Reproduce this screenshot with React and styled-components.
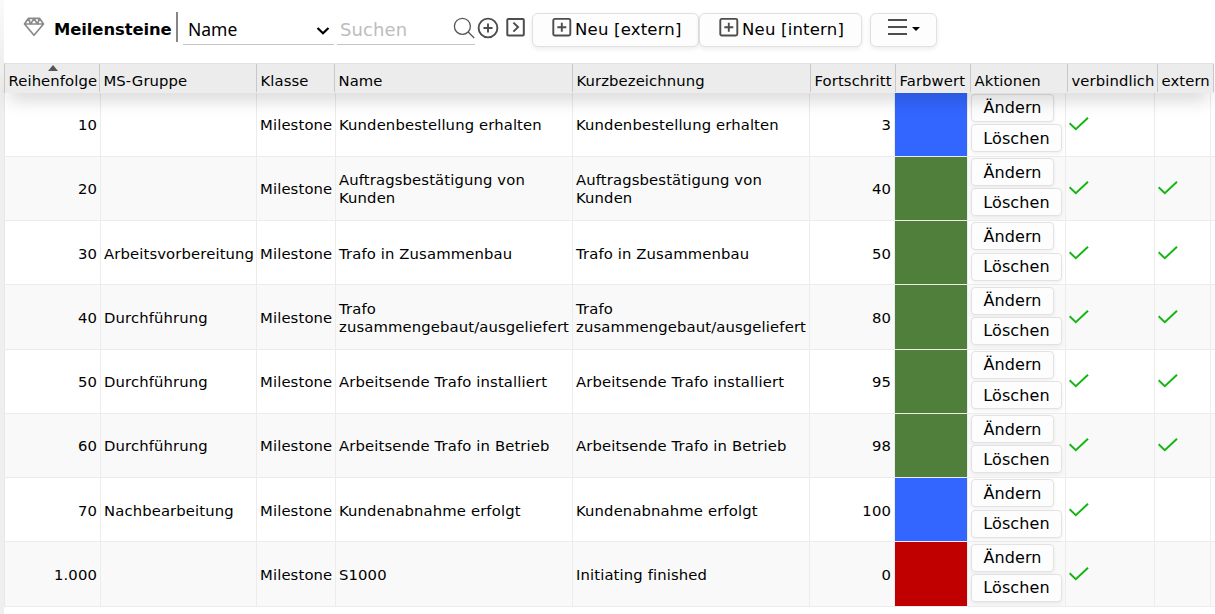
import React, { useState } from 'react';
import styled, { createGlobalStyle } from 'styled-components';

const GlobalStyle = createGlobalStyle`
  * {
    box-sizing: border-box;
  }
  body {
    margin: 0;
    overflow: hidden;
    background: #fff;
    color: #000;
    font-family: 'DejaVu Sans', Verdana, sans-serif;
  }
`;

const Page = styled.div`
  display: flex;
  height: 614px;
  overflow: hidden;
`;

const Edge = styled.div`
  flex: 0 0 4px;
  background: linear-gradient(to bottom, #fafafa, #efefef 60px);
`;

const Main = styled.div`
  flex: 1;
  min-width: 0;
`;

const Toolbar = styled.div`
  display: flex;
  align-items: flex-start;
  height: 63px;
  padding: 12px 0 0 19px;
`;

const Gem = styled.svg`
  flex: none;
  width: 22px;
  height: 20px;
  margin-top: 5px;
`;

const Title = styled.div`
  width: 131px;
  padding-left: 9px;
  font-size: 16.4px;
  font-weight: bold;
  line-height: 36px;
  letter-spacing: -0.08px;
  white-space: nowrap;
`;

const Divider = styled.div`
  width: 2px;
  height: 30px;
  background: #868686;
`;

const Select = styled.button`
  display: flex;
  justify-content: space-between;
  width: 151px;
  height: 33px;
  margin: 0 3px 0 5px;
  padding: 0 4px 0 5px;
  border: 0;
  border-bottom: 1px solid #c4c4c4;
  background: none;
  color: #000;
  font: 17.5px/35px 'Noto Sans', sans-serif;
  text-align: left;

  svg {
    width: 14px;
    height: 10px;
    margin-top: 14px;
  }
`;

const Search = styled.div`
  display: flex;
  width: 138px;
  height: 33px;
  border-bottom: 1px solid #c4c4c4;

  input {
    width: 116px;
    padding: 2px 0 0 3px;
    border: 0;
    outline: 0;
    background: none;
    font: 18px 'DejaVu Sans', sans-serif;
    letter-spacing: 0.1px;
  }
  input::placeholder {
    color: #bdbdbd;
    opacity: 1;
  }
  svg {
    flex: none;
    width: 22px;
    height: 22px;
    margin-top: 5px;
  }
`;

const IconButton = styled.button`
  display: flex;
  margin: 4px 0 0 ${(p) => p.$gap}px;
  padding: 0;
  border: 0;
  background: none;
`;

const Button = styled.button`
  display: flex;
  width: ${(p) => p.$width}px;
  height: 34px;
  margin: 1px 0 0 ${(p) => p.$gap || 0}px;
  padding: 0 0 0 ${(p) => p.$pad}px;
  border: 1px solid #e0e0e0;
  border-radius: 6px;
  background: #fdfdfd;
  box-shadow: 0 2px 5px rgba(0, 0, 0, 0.08);
  color: #000;
  font: 16.5px/31px 'DejaVu Sans', sans-serif;
  letter-spacing: 0.2px;
  white-space: nowrap;

  svg {
    flex: none;
    margin-top: 3px;
  }
  span {
    margin-left: 3px;
  }
`;

const Head = styled.div`
  display: grid;
  grid-template-columns: 95px 157px 78px 238px 238px 85px 75px 97px 90px 56px;
  position: relative;
  z-index: 1;
  width: 1210px;
  height: 29.6px;
  border-top: 1px solid #e2e2e2;
  border-left: 1px solid #c8c8c8;
  background: #ececec;
  box-shadow: 0 12px 18px -5px rgba(0, 0, 0, 0.16);
`;

const HeadCell = styled.div`
  position: relative;
  height: 28px;
  padding-left: 3.5px;
  border-right: 1px solid #c8c8c8;
  font-size: 14.8px;
  line-height: 34px;
  letter-spacing: 0.1px;
  white-space: nowrap;
`;

const SortMark = styled.i`
  position: absolute;
  top: 1px;
  left: 43px;
  border: solid transparent;
  border-width: 0 5px 6px;
  border-bottom-color: #555;
`;

// fractional height, the rows snap to 64px or 65px
const Row = styled.div`
  display: grid;
  grid-template-columns: 96px 156px 79px 237px 237px 85px 73px 98px 89px 56px 1fr;
  grid-template-rows: 100%;
  height: 64.25px;
  border-left: 1px solid #e8e8e8;
  border-bottom: 1px solid #ececec;
  background: #fff;

  &:nth-child(even) {
    background: #f9f9f9;
  }
`;

const Cell = styled.div`
  display: flex;
  align-items: center;
  justify-content: ${(p) => (p.$right ? 'flex-end' : 'flex-start')};
  padding: 1.75px 3px 0;
  border-right: 1px solid #ececec;
  font-size: 14.8px;
  line-height: 18px;
  letter-spacing: 0.13px;
  white-space: pre;

  svg {
    margin-bottom: 2px;
  }
`;

const Swatch = styled.div`
  border-right: 1px solid #ececec;
  background: ${(p) => p.$color} content-box;
`;

const Actions = styled.div`
  display: flex;
  flex-direction: column;
  align-items: flex-start;
  gap: 2.25px;
  padding: 1.25px 0 0 3px;
  border-right: 1px solid #ececec;
`;

const ActionButton = styled.button`
  flex: none;
  width: ${(p) => p.$width}px;
  height: 28px;
  padding: 0;
  border: 1px solid #e2e2e2;
  border-radius: 4px;
  background: #fdfdfd;
  box-shadow: 0 2px 4px rgba(0, 0, 0, 0.06);
  color: #000;
  font: 16px/25px 'DejaVu Sans', sans-serif;
  letter-spacing: 0.1px;
`;

const blue = '#3366ff';
const green = '#4f7f3a';
const red = '#c00000';

const milestones = [
  { order: '10', group: '', name: 'Kundenbestellung erhalten', progress: 3, color: blue, binding: true },
  { order: '20', group: '', name: 'Auftragsbestätigung von\nKunden', progress: 40, color: green, binding: true, external: true },
  { order: '30', group: 'Arbeitsvorbereitung', name: 'Trafo in Zusammenbau', progress: 50, color: green, binding: true, external: true },
  { order: '40', group: 'Durchführung', name: 'Trafo\nzusammengebaut/ausgeliefert', progress: 80, color: green, binding: true, external: true },
  { order: '50', group: 'Durchführung', name: 'Arbeitsende Trafo installiert', progress: 95, color: green, binding: true, external: true },
  { order: '60', group: 'Durchführung', name: 'Arbeitsende Trafo in Betrieb', progress: 98, color: green, binding: true, external: true },
  { order: '70', group: 'Nachbearbeitung', name: 'Kundenabnahme erfolgt', progress: 100, color: blue, binding: true },
  { order: '1.000', group: '', name: 'S1000', short: 'Initiating finished', progress: 0, color: red, binding: true },
];

function PlusBox() {
  return (
    <svg width="20" height="20" viewBox="0 0 20 20" fill="none" stroke="#4d4d4d" strokeWidth="1.9">
      <rect x="1.3" y="1.9" width="17" height="16.6" rx="1.5" />
      <path d="M5.3 10.2h9M9.8 5.7v9" />
    </svg>
  );
}

function Check() {
  return (
    <svg width="20" height="14" viewBox="0 0 20 14" fill="none" stroke="#10b510" strokeWidth="1.9">
      <path d="M.6 6.3 6.8 12.2 19 .8" />
    </svg>
  );
}

function MilestoneRow({ item }) {
  return (
    <Row>
      <Cell $right>{item.order}</Cell>
      <Cell>{item.group}</Cell>
      <Cell>Milestone</Cell>
      <Cell>{item.name}</Cell>
      <Cell>{item.short || item.name}</Cell>
      <Cell $right>{item.progress}</Cell>
      <Swatch $color={item.color} />
      <Actions>
        <ActionButton $width={83}>Ändern</ActionButton>
        <ActionButton $width={91}>Löschen</ActionButton>
      </Actions>
      <Cell>{item.binding && <Check />}</Cell>
      <Cell>{item.external && <Check />}</Cell>
    </Row>
  );
}

function App() {
  const [search, setSearch] = useState('');

  return (
    <>
      <GlobalStyle />
      <Page>
        <Edge />
        <Main>
          <Toolbar>
            <Gem viewBox="0 0 22 20" fill="none" stroke="#8a8a8a" strokeWidth="1.7" strokeLinejoin="round">
              <path d="M5.5 1.3h11l4 5.7-9.5 11.2L1.5 7zM1.5 7h19M5.5 1.3l2 5.7L11 1.6 14.5 7l2-5.7" />
            </Gem>
            <Title>Meilensteine</Title>
            <Divider />
            <Select>
              Name
              <svg viewBox="0 0 14 10" fill="none" stroke="#000" strokeWidth="2.2">
                <path d="M1.5 2 7 7.3 12.5 2" />
              </svg>
            </Select>
            <Search>
              <input placeholder="Suchen" value={search} onChange={(e) => setSearch(e.target.value)} />
              <svg viewBox="0 0 22 22" fill="none" stroke="#555" strokeWidth="1.3">
                <circle cx="9.4" cy="9.3" r="8" />
                <path d="m15.2 15 6 6" />
              </svg>
            </Search>
            <IconButton $gap={2}>
              <svg width="22" height="24" viewBox="0 0 22 24" fill="none" stroke="#4d4d4d" strokeWidth="1.9">
                <circle cx="11" cy="12" r="9.4" />
                <path d="M6.5 12h9M11 7.5v9" />
              </svg>
            </IconButton>
            <IconButton $gap={7}>
              <svg width="20" height="22" viewBox="0 0 20 22" fill="none" stroke="#4d4d4d" strokeWidth="2">
                <rect x="1.3" y="2.9" width="16.5" height="16.5" rx="1" />
                <path d="m7.4 6.6 4.6 4.5-4.6 4.5" />
              </svg>
            </IconButton>
            <Button $width={167} $gap={6} $pad={19}>
              <PlusBox />
              <span>Neu [extern]</span>
            </Button>
            <Button $width={163} $pad={19}>
              <PlusBox />
              <span>Neu [intern]</span>
            </Button>
            <Button $width={67} $gap={8} $pad={17}>
              <svg width="34" height="20" viewBox="0 0 34 20">
                <path d="M0 2.9h19M0 10h19M0 17h19" stroke="#4d4d4d" strokeWidth="2" />
                <path d="M24 10h8l-4 4z" />
              </svg>
            </Button>
          </Toolbar>
          <Head>
            <HeadCell>
              Reihenfolge
              <SortMark />
            </HeadCell>
            <HeadCell>MS-Gruppe</HeadCell>
            <HeadCell>Klasse</HeadCell>
            <HeadCell>Name</HeadCell>
            <HeadCell>Kurzbezeichnung</HeadCell>
            <HeadCell>Fortschritt</HeadCell>
            <HeadCell>Farbwert</HeadCell>
            <HeadCell>Aktionen</HeadCell>
            <HeadCell>verbindlich</HeadCell>
            <HeadCell>extern</HeadCell>
          </Head>
          <div>
            {milestones.map((item) => (
              <MilestoneRow key={item.order} item={item} />
            ))}
          </div>
        </Main>
      </Page>
    </>
  );
}

export default App;
